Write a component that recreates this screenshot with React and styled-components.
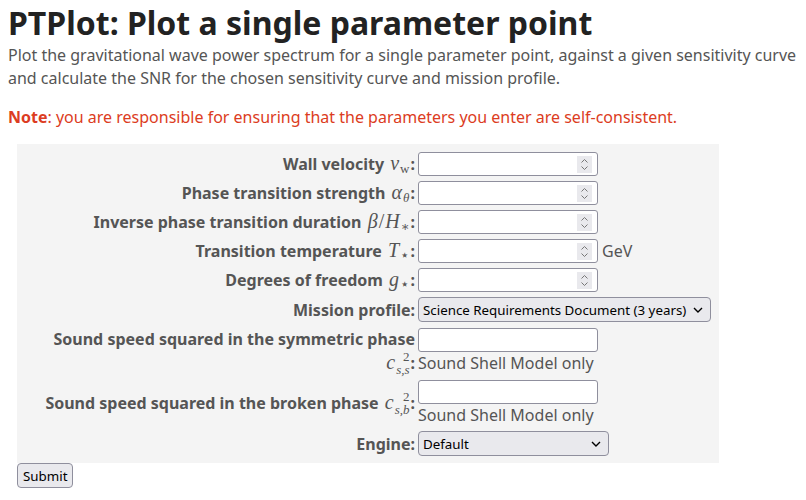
import React from 'react';
import styled, { createGlobalStyle } from 'styled-components';

const GlobalStyle = createGlobalStyle`
  body {
    margin: 8px;
    font-family: "Noto Sans", "Open Sans", sans-serif;
    color: #555;
    background: #fff;
  }
`;

const Title = styled.h1`
  margin: 0;
  font-size: 32px;
  line-height: 30px;
  font-weight: 700;
  color: #222;
`;

const Lead = styled.p`
  margin: 6px 0 0;
  font-size: 16px;
  line-height: 23px;
  color: #555;
`;

const Note = styled.p`
  margin: 16px 0 0;
  font-size: 16px;
  line-height: 23px;
  color: #dc3c22;
  & b {
    font-weight: 700;
  }
`;

const Form = styled.form`
  margin: 15px 0 0 9px;
`;

const FormGrid = styled.div`
  width: 702px;
  box-sizing: border-box;
  background: #f4f4f4;
  padding: 8px 3px 7px;
  display: grid;
  grid-template-columns: 395px 1fr;
  column-gap: 3px;
  row-gap: 5px;
  align-items: center;
`;

const Label = styled.label`
  text-align: right;
  font-weight: 700;
  font-size: 16px;
  line-height: 24px;
  color: #555;
`;

const Cell = styled.div`
  display: flex;
  flex-direction: ${(p) => (p.$stack ? 'column' : 'row')};
  align-items: ${(p) => (p.$stack ? 'flex-start' : 'center')};
  gap: ${(p) => (p.$stack ? '0' : '4px')};
`;

const Field = styled.div`
  width: 180px;
  height: 24px;
  box-sizing: border-box;
  border: 1px solid #8f8f9d;
  border-radius: 3px;
  background: #fff;
  display: flex;
  align-items: center;
  padding-right: 5px;
`;

const TextInput = styled.input`
  flex: 1;
  min-width: 0;
  height: 100%;
  border: none;
  outline: none;
  background: transparent;
  padding: 0 4px;
  font: 13px "Noto Sans", sans-serif;
`;

const Spinner = styled.span`
  width: 15px;
  height: 17px;
  background: #e9e9ed;
  display: flex;
  align-items: center;
  justify-content: center;
`;

const Select = styled.select`
  width: ${(p) => p.$w}px;
  height: 25px;
  box-sizing: border-box;
  border: 1px solid #8f8f9d;
  border-radius: 4px;
  background: #e9e9ed;
  color: #000;
  font: 13.33px "Noto Sans", sans-serif;
  padding: 0 20px 0 4px;
  appearance: none;
  background-image: url("data:image/svg+xml;utf8,<svg xmlns='http://www.w3.org/2000/svg' width='10' height='6' viewBox='0 0 10 6'><path d='M1 1l4 4 4-4' fill='none' stroke='black' stroke-width='1.4'/></svg>");
  background-repeat: no-repeat;
  background-position: right 7px center;
`;

const Unit = styled.span`
  font-size: 16px;
  color: #555;
`;

const Hint = styled.span`
  font-size: 16px;
  line-height: 22px;
  color: #555;
`;

const Math = styled.span`
  font-family: "Liberation Serif", "DejaVu Serif", serif;
  font-style: italic;
  font-weight: 400;
  font-size: 20px;
  line-height: 1;
  padding: 0 1px 0 2px;
`;

const Roman = styled.span`
  font-style: normal;
`;

const Star = styled.span`
  font-family: "DejaVu Sans", sans-serif;
  font-style: normal;
  font-size: 15px;
  line-height: 0;
`;

const Sub = styled.sub`
  font-size: 13px;
  vertical-align: -3px;
  line-height: 0;
  margin-left: 1px;
`;

const Slash = styled.span`
  font-style: normal;
  margin: 0 1px;
`;

const Scripts = styled.span`
  display: inline-flex;
  flex-direction: column;
  vertical-align: 8px;
  margin: -3px 0 -3px 1px;
  font-size: 13px;
  line-height: 13px;
`;

const Submit = styled.button`
  height: 25px;
  padding: 0 5px;
  border: 1px solid #8f8f9d;
  border-radius: 4px;
  background: #e9e9ed;
  color: #000;
  font: 13.33px "Noto Sans", sans-serif;
`;

const Chevrons = () => (
  <svg width="9" height="13" viewBox="0 0 9 13">
    <path d="M1.5 4.5L4.5 1.5L7.5 4.5M1.5 8.5L4.5 11.5L7.5 8.5" fill="none" stroke="#777" strokeWidth="1" />
  </svg>
);

const NumberField = () => (
  <Field>
    <TextInput type="text" />
    <Spinner>
      <Chevrons />
    </Spinner>
  </Field>
);

const PlainField = () => (
  <Field>
    <TextInput type="text" />
  </Field>
);

const SoundSpeed = ({ phase }) => (
  <Math>
    c
    <Scripts>
      <Roman>2</Roman>
      <span>s,{phase}</span>
    </Scripts>
  </Math>
);

export default function App() {
  return (
    <>
      <GlobalStyle />
      <Title>PTPlot: Plot a single parameter point</Title>
      <Lead>
        Plot the gravitational wave power spectrum for a single parameter point, against a given sensitivity curve
        and calculate the SNR for the chosen sensitivity curve and mission profile.
      </Lead>
      <Note>
        <b>Note</b>: you are responsible for ensuring that the parameters you enter are self-consistent.
      </Note>
      <Form onSubmit={(e) => e.preventDefault()}>
        <FormGrid>
          <Label>
            Wall velocity <Math>v<Sub><Roman>w</Roman></Sub></Math>:
          </Label>
          <Cell>
            <NumberField />
          </Cell>

          <Label>
            Phase transition strength <Math>α<Sub>θ</Sub></Math>:
          </Label>
          <Cell>
            <NumberField />
          </Cell>

          <Label>
            Inverse phase transition duration <Math>β<Slash>/</Slash>H<Sub>∗</Sub></Math>:
          </Label>
          <Cell>
            <NumberField />
          </Cell>

          <Label>
            Transition temperature <Math>T<Sub><Star>⋆</Star></Sub></Math>:
          </Label>
          <Cell>
            <NumberField />
            <Unit>GeV</Unit>
          </Cell>

          <Label>
            Degrees of freedom <Math>g<Sub><Star>⋆</Star></Sub></Math>:
          </Label>
          <Cell>
            <NumberField />
          </Cell>

          <Label>Mission profile:</Label>
          <Cell>
            <Select $w={293} defaultValue="srd">
              <option value="srd">Science Requirements Document (3 years)</option>
            </Select>
          </Cell>

          <Label>
            Sound speed squared in the symmetric phase
            <br />
            <SoundSpeed phase="s" />:
          </Label>
          <Cell $stack>
            <PlainField />
            <Hint>Sound Shell Model only</Hint>
          </Cell>

          <Label>
            Sound speed squared in the broken phase <SoundSpeed phase="b" />:
          </Label>
          <Cell $stack>
            <PlainField />
            <Hint>Sound Shell Model only</Hint>
          </Cell>

          <Label>Engine:</Label>
          <Cell>
            <Select $w={191} defaultValue="default">
              <option value="default">Default</option>
            </Select>
          </Cell>
        </FormGrid>
        <Submit type="submit">Submit</Submit>
      </Form>
    </>
  );
}
